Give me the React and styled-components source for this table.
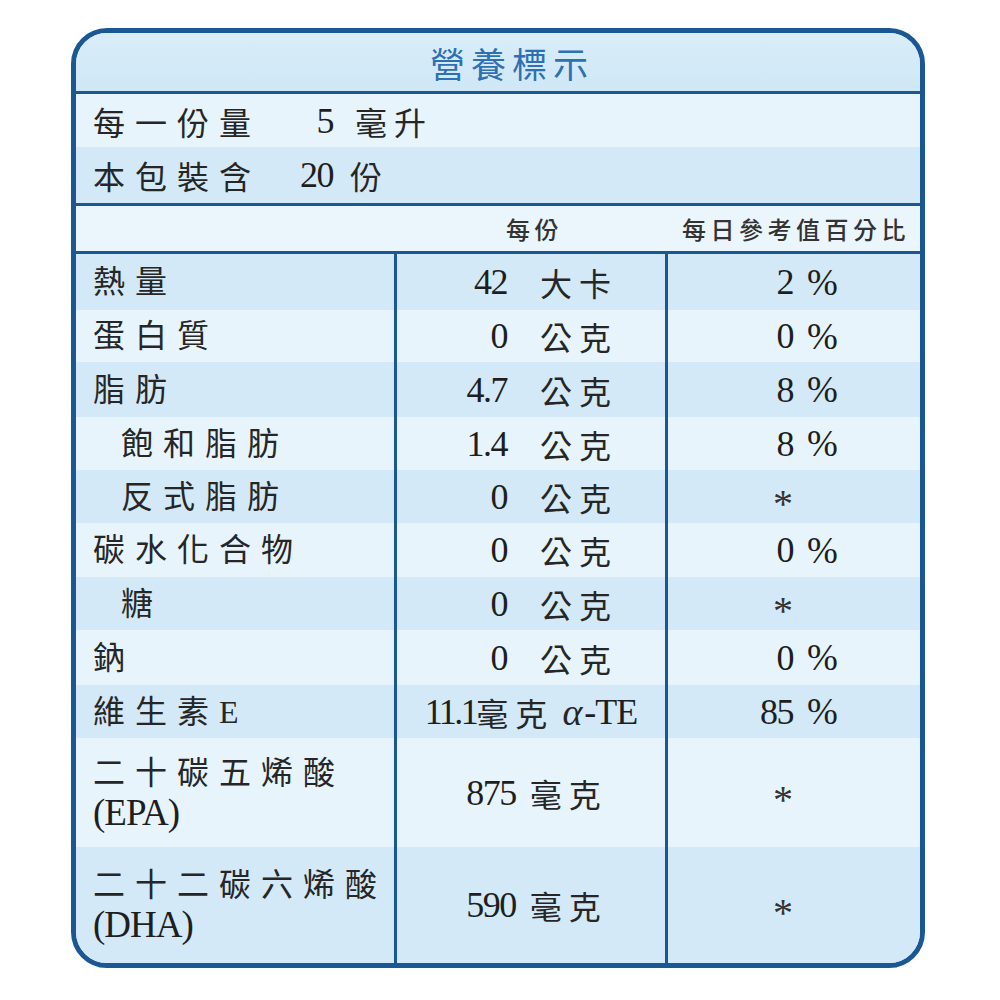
import React from 'react';
import styled, { createGlobalStyle } from 'styled-components';

// Nutrition facts label (營養標示)
const Global = createGlobalStyle`
    html, body {
        margin: 0;
        padding: 0;
        background: #ffffff;
    }
    body {
        font-family: "Liberation Serif", "Noto Sans CJK TC", serif;
        color: #262626;
    }
`;

const Page = styled.div`
    width: 1000px;
    height: 1000px;
    padding: 28px 0 0 71px;
    box-sizing: border-box;
`;

const Card = styled.div`
    width: 854px;
    height: 940px;
    box-sizing: border-box;
    border: 5px solid #1b5794;
    border-radius: 36px;
    overflow: hidden;
    background: #e7f3fb;
    display: flex;
    flex-direction: column;
`;

const Title = styled.div`
    height: 58px;
    border-bottom: 3px solid #1b5794;
    background: linear-gradient(#d9edf9, #cfe7f6);
    display: flex;
    align-items: center;
    justify-content: center;
    padding-left: 28px;
    font-size: 35px;
    letter-spacing: 6px;
    color: #2f6fb3;
`;

const Serving = styled.div`
    border-bottom: 3px solid #1b5794;
    display: flex;
    flex-direction: column;
`;

const ServingRow = styled.div`
    height: ${({ $h }) => $h}px;
    background: ${({ $dark }) => ($dark ? '#d3e9f7' : '#e8f4fc')};
    display: grid;
    grid-template-columns: 200px 40px auto;
    align-items: center;
    padding-left: 17px;
    font-size: 32px;
`;

const Label = styled.span`
    letter-spacing: 10px;
    padding-left: ${({ $indent }) => ($indent ? 28 : 0)}px;
    white-space: nowrap;
`;

const Num = styled.span`
    text-align: right;
    font-size: 36px;
    letter-spacing: -1.5px;
    color: #1e1e1e;
`;

const Unit = styled.span`
    padding-left: ${({ $gap }) => $gap}px;
    letter-spacing: 7px;
    white-space: nowrap;
`;

const Pct = styled.span`
    padding-left: 14px;
    font-size: 37px;
    color: #1e1e1e;
`;

const Header = styled.div`
    height: 45px;
    border-bottom: 3px solid #1b5794;
    background: #eaf5fc;
    display: grid;
    grid-template-columns: 321px 271px 1fr;
    align-items: center;
    font-size: 24px;
    font-weight: 500;
    letter-spacing: 4.5px;
    color: #333;
`;

const HeadCell = styled.span`
    grid-column: ${({ $col }) => $col};
    text-align: center;
    padding-left: 4px;
    white-space: nowrap;
`;

const Rows = styled.div`
    display: flex;
    flex-direction: column;
    flex: 1;
`;

const Row = styled.div`
    height: ${({ $h }) => $h}px;
    background: ${({ $dark }) => ($dark ? '#d3e9f7' : '#e8f4fc')};
    display: grid;
    grid-template-columns: 321px 271px 1fr;
    font-size: 32px;
`;

const NameCell = styled.div`
    border-right: 3px solid #1b5794;
    padding-left: 17px;
    display: flex;
    flex-direction: column;
    justify-content: center;
    line-height: 40px;
`;

const Sub = styled.span`
    font-size: 37px;
    letter-spacing: -1px;
    color: #1e1e1e;
`;

const AmountCell = styled.div`
    border-right: 3px solid #1b5794;
    display: grid;
    grid-template-columns: 110px auto;
    align-items: center;
`;

const CenterCell = styled.div`
    border-right: 3px solid #1b5794;
    display: flex;
    align-items: center;
    justify-content: center;
    padding-left: ${({ $shift }) => $shift || 0}px;
    white-space: nowrap;
`;

const DvCell = styled.div`
    display: grid;
    grid-template-columns: 125px auto;
    align-items: center;
`;

const Star = styled.span`
    text-align: right;
    padding-right: 0;
    font-size: 40px;
    color: #333;
    transform: translateY(7px);
`;

const Alpha = styled.span`
    font-style: italic;
    font-size: 38px;
    padding: 0 2px 0 8px;
`;

const Latin = styled.span`
    font-size: 36px;
    letter-spacing: ${({ $ls }) => $ls || 0}px;
    color: #1e1e1e;
`;

const rows = [
    { name: '熱量', amount: '42', unit: '大卡', dv: '2', h: 56 },
    { name: '蛋白質', amount: '0', unit: '公克', dv: '0', h: 52 },
    { name: '脂肪', amount: '4.7', unit: '公克', dv: '8', h: 55 },
    { name: '飽和脂肪', indent: true, amount: '1.4', unit: '公克', dv: '8', h: 53 },
    { name: '反式脂肪', indent: true, amount: '0', unit: '公克', dv: '*', h: 53 },
    { name: '碳水化合物', amount: '0', unit: '公克', dv: '0', h: 54 },
    { name: '糖', indent: true, amount: '0', unit: '公克', dv: '*', h: 53 },
    { name: '鈉', amount: '0', unit: '公克', dv: '0', h: 55 },
    { name: '維生素E', amount: 'vitE', dv: '85', h: 53 },
    { name: '二十碳五烯酸', sub: '(EPA)', amount: '875', unit: '毫克', center: true, dv: '*', h: 109 },
    { name: '二十二碳六烯酸', sub: '(DHA)', amount: '590', unit: '毫克', center: true, dv: '*', h: 116 },
];

const Amount = ({ row }) => {
    if (row.amount === 'vitE') {
        return (
            <CenterCell>
                <Latin $ls={-2.5}>11.1</Latin>
                <Unit $gap={0}>毫克</Unit>
                <Alpha>α</Alpha>
                <Latin $ls={-1}>-TE</Latin>
            </CenterCell>
        );
    }
    if (row.center) {
        return (
            <CenterCell $shift={12}>
                <Latin $ls={-1.5}>{row.amount}</Latin>
                <Unit $gap={14}>{row.unit}</Unit>
            </CenterCell>
        );
    }
    return (
        <AmountCell>
            <Num>{row.amount}</Num>
            <Unit $gap={33}>{row.unit}</Unit>
        </AmountCell>
    );
};

const Dv = ({ value }) => (
    <DvCell>
        {value === '*' ? <Star>*</Star> : <Num>{value}</Num>}
        {value !== '*' && <Pct>%</Pct>}
    </DvCell>
);

export default function App() {
    return (
        <Page>
            <Global />
            <Card>
                <Title>營養標示</Title>
                <Serving>
                    <ServingRow $h={53}>
                        <Label>每一份量</Label>
                        <Num>5</Num>
                        <Unit $gap={22}>毫升</Unit>
                    </ServingRow>
                    <ServingRow $h={56} $dark>
                        <Label>本包裝含</Label>
                        <Num>20</Num>
                        <Unit $gap={17}>份</Unit>
                    </ServingRow>
                </Serving>
                <Header>
                    <HeadCell $col={2}>每份</HeadCell>
                    <HeadCell $col={3}>每日參考值百分比</HeadCell>
                </Header>
                <Rows>
                    {rows.map((row, i) => (
                        <Row key={row.name} $h={row.h} $dark={i % 2 === 0}>
                            <NameCell>
                                <Label $indent={row.indent}>{row.name}</Label>
                                {row.sub && <Sub>{row.sub}</Sub>}
                            </NameCell>
                            <Amount row={row} />
                            <Dv value={row.dv} />
                        </Row>
                    ))}
                </Rows>
            </Card>
        </Page>
    );
}
